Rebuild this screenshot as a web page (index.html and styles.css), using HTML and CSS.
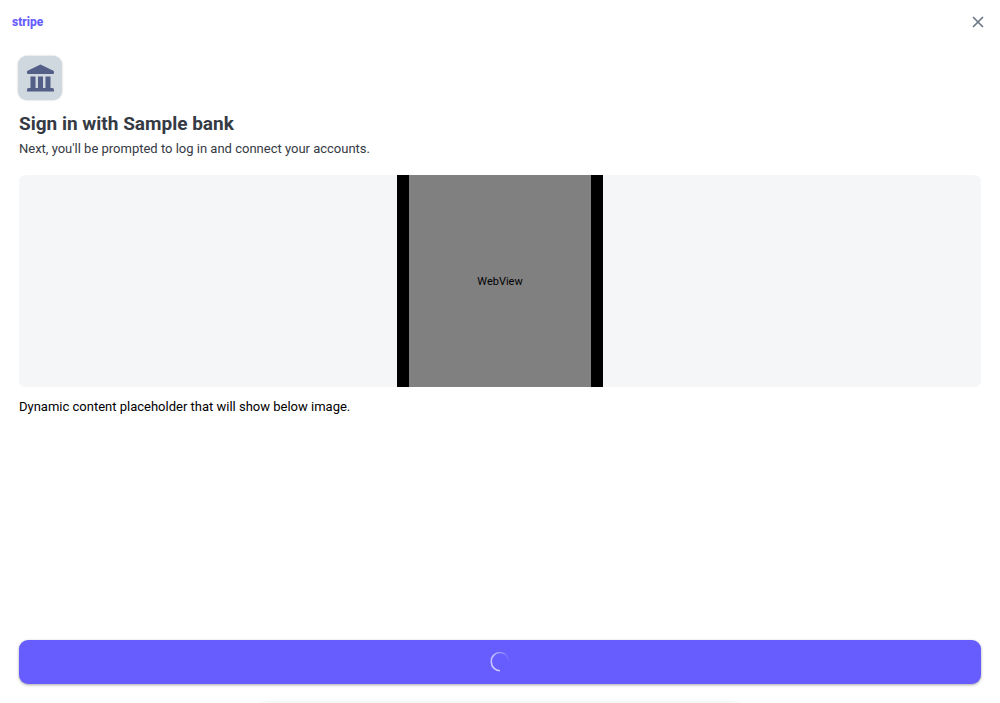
FILE: index.html
```html
<!DOCTYPE html>
<html lang="en">
<head>
<meta charset="utf-8">
<meta name="viewport" content="width=device-width, initial-scale=1">
<title>Sign in with Sample bank</title>
<link rel="stylesheet" href="styles.css">
</head>
<body>
<div class="page">
  <header class="topbar">
    <span class="brand">stripe</span>
    <button class="close" type="button" aria-label="Close">
      <svg width="12" height="12" viewBox="0 0 12 12" aria-hidden="true"><path d="M1 1l10 10M11 1L1 11" fill="none" stroke="#687385" stroke-width="1.6"/></svg>
    </button>
  </header>
  <main class="content">
    <div class="bank-icon">
      <svg width="28" height="28" viewBox="0 0 28 28" aria-hidden="true"><path fill="#535f87" d="M14.500 0.500L27.400 6.800Q28 7.200 28 8V9Q28 10 27 10H2Q1 10 1 9V8Q1 7.200 1.600 6.800ZM4.500 12.500h5v11.500h-5zM12 12.500h5v11.500h-5zM19.500 12.500h5v11.500h-5zM2.500 24H26.500Q28 24.200 28 26V27.500H1V26Q1 24.200 2.500 24Z"/></svg>
    </div>
    <h1 class="title">Sign in with Sample bank</h1>
    <p class="subtitle">Next, you'll be prompted to log in and connect your accounts.</p>
    <div class="preview">
      <div class="phone">WebView</div>
    </div>
    <p class="note">Dynamic content placeholder that will show below image.</p>
  </main>
  <footer class="footer">
    <button class="continue" type="button" aria-label="Loading">
      <svg width="20" height="20" viewBox="0 0 20 20" fill="none" stroke-width="1.6" aria-hidden="true">
        <defs><linearGradient id="fade" x1="0" y1="0" x2="1" y2="0"><stop offset="0.1" stop-color="#fff" stop-opacity=".6"/><stop offset="1" stop-color="#fff" stop-opacity=".05"/></linearGradient></defs>
        <path d="M1.300 10A8.700 8.700 0 0 1 18.700 8.500" stroke="url(#fade)"/>
        <path d="M10 18.700A8.700 8.700 0 0 1 1.300 10" stroke="#fff" stroke-opacity=".65"/>
      </svg>
    </button>
    <div class="edge"></div>
  </footer>
</div>
</body>
</html>
```
FILE: styles.css
```css
* { box-sizing: border-box; }
body { margin: 0; background: #fff; font-family: Roboto, "Liberation Sans", sans-serif; color: #353a44; }
.page { min-height: 100vh; display: flex; flex-direction: column; }
.topbar { display: flex; align-items: center; justify-content: space-between; height: 44px; padding: 0 12px; }
.brand { font-size: 12px; line-height: 16px; font-weight: 800; color: #675dff; }
.close { display: flex; align-items: center; justify-content: center; width: 20px; height: 20px; padding: 0; border: 0; background: none; }
.content { flex: 1; padding: 12px 19px 0; }
.bank-icon { display: flex; align-items: center; justify-content: center; width: 44px; height: 44px; margin-left: -1px; border-radius: 9px; background: #cfd7df; box-shadow: 0 0 2px rgba(0, 0, 0, .25); }
.title { margin: 12px 0 0; font-size: 19px; line-height: 24px; font-weight: 700; }
.subtitle { margin: 3px 0 0; font-size: 13px; line-height: 20px; }
.preview { display: flex; justify-content: center; height: 212px; margin-top: 16px; border-radius: 6px; background: #f5f6f8; }
.phone { display: flex; align-items: center; justify-content: center; width: 206px; border: solid #000; border-width: 0 12px; background: #808080; color: #000; font-size: 11px; }
.note { margin: 10px 0 0; font-size: 13px; line-height: 20px; color: #000; }
.footer { padding: 0 19px; }
.continue { display: flex; align-items: center; justify-content: center; width: 100%; height: 44px; padding: 0; border: 0; border-radius: 9px; background: #675dff; box-shadow: 0 1px 3px rgba(0, 0, 0, .35); }
.edge { width: 51%; height: 2px; margin: 17px auto 0; background: linear-gradient(90deg, #fff, #f6f6f6 3%, #f6f6f6 97%, #fff); }
```
